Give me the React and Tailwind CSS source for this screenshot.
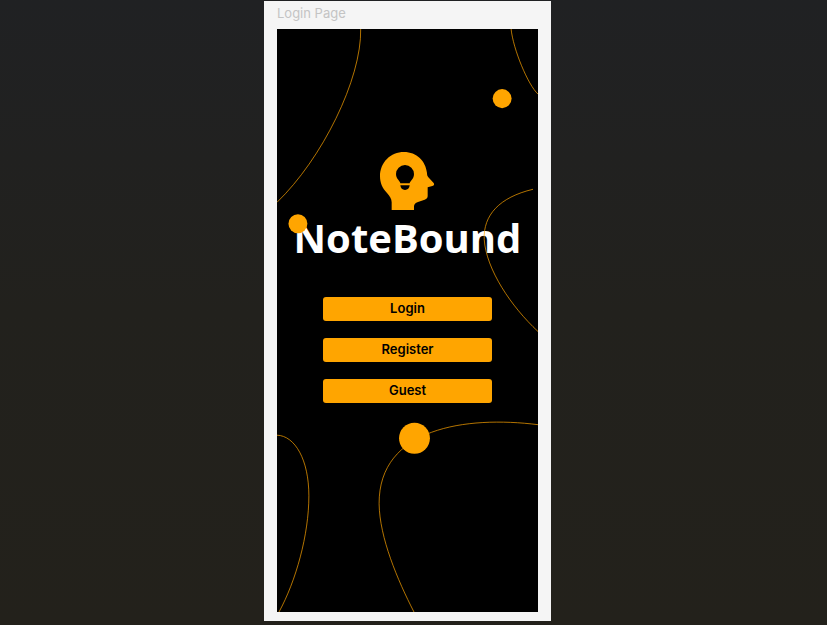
const actions = ['Login', 'Register', 'Guest'];

function HeadBulbIcon() {
  return (
    <svg viewBox="18 21 165 174" className="h-[58px] w-[55px]" fill="#ffa500" aria-hidden="true">
      <path d="M53 195V172C53 160 47 154 39 144C25 130 18 113 18 94C18 52 50 21 90 21C128 21 155 48 159 84C159 90 160 93 163 97L179 114Q183 121 175 123L161 127V153Q161 161 152 164L132 171Q120 175 120 184V195Z" />
      <path fill="#000" d="M79 115C78 107 66 102 66 87A27 27 0 0 1 120 87C120 102 109 107 107 115Z" />
      <path fill="#000" d="M79 121H107C106 130 101 135 93 135S80 130 79 121Z" />
    </svg>
  );
}

function Decoration() {
  return (
    <svg
      viewBox="0 0 262 582"
      preserveAspectRatio="none"
      className="pointer-events-none absolute inset-0 h-full w-full"
      aria-hidden="true"
    >
      <g fill="none" stroke="#ffa500" strokeWidth="0.7">
        <path d="M84 0C85 50 45 130 0 173" />
        <path d="M235 0C237 20 252 56 262 65" />
        <path d="M257 160C223 168 207 186 208 210C210 240 235 277 262 302" />
        <path d="M0 405.500C18 406 32 430 32 466C32 505 19 551 2 582" />
        <path d="M262 395C190 386 102 398 102.500 474C103 508 121 550 137.500 582" />
      </g>
      <g fill="#ffa500">
        <circle cx="226" cy="69.500" r="9.500" />
        <circle cx="21" cy="194.500" r="9.500" />
        <circle cx="138" cy="408.500" r="15.500" />
      </g>
    </svg>
  );
}

export default function App() {
  return (
    <div className="flex min-h-screen flex-col items-center bg-linear-to-b from-[#202123] via-[#22211d] to-[#23211b] pt-px pr-3 pb-1 font-['Inter',sans-serif]">
      <div className="flex w-full max-w-[287px] flex-1 flex-col bg-[#f5f5f5] px-[13px] pb-[9px]">
        <p className="pt-[2px] pb-[6px] text-[13px] leading-5 text-[#c4c4c4]">Login Page</p>
        <main className="relative flex flex-1 flex-col items-center bg-black pt-[123px]">
          <HeadBulbIcon />
          <h1 className="mt-[7px] font-['Open_Sans',sans-serif] text-[40px] leading-[42px] font-bold text-white">
            NoteBound
          </h1>
          <div className="mt-[38px] flex w-full flex-col gap-[17px] px-[46px]">
            {actions.map((label) => (
              <button
                key={label}
                type="button"
                className="h-6 rounded-[3px] bg-[#ffa500] pb-[2px] text-[13px] leading-5 font-semibold text-black"
              >
                {label}
              </button>
            ))}
          </div>
          <Decoration />
        </main>
      </div>
    </div>
  );
}
